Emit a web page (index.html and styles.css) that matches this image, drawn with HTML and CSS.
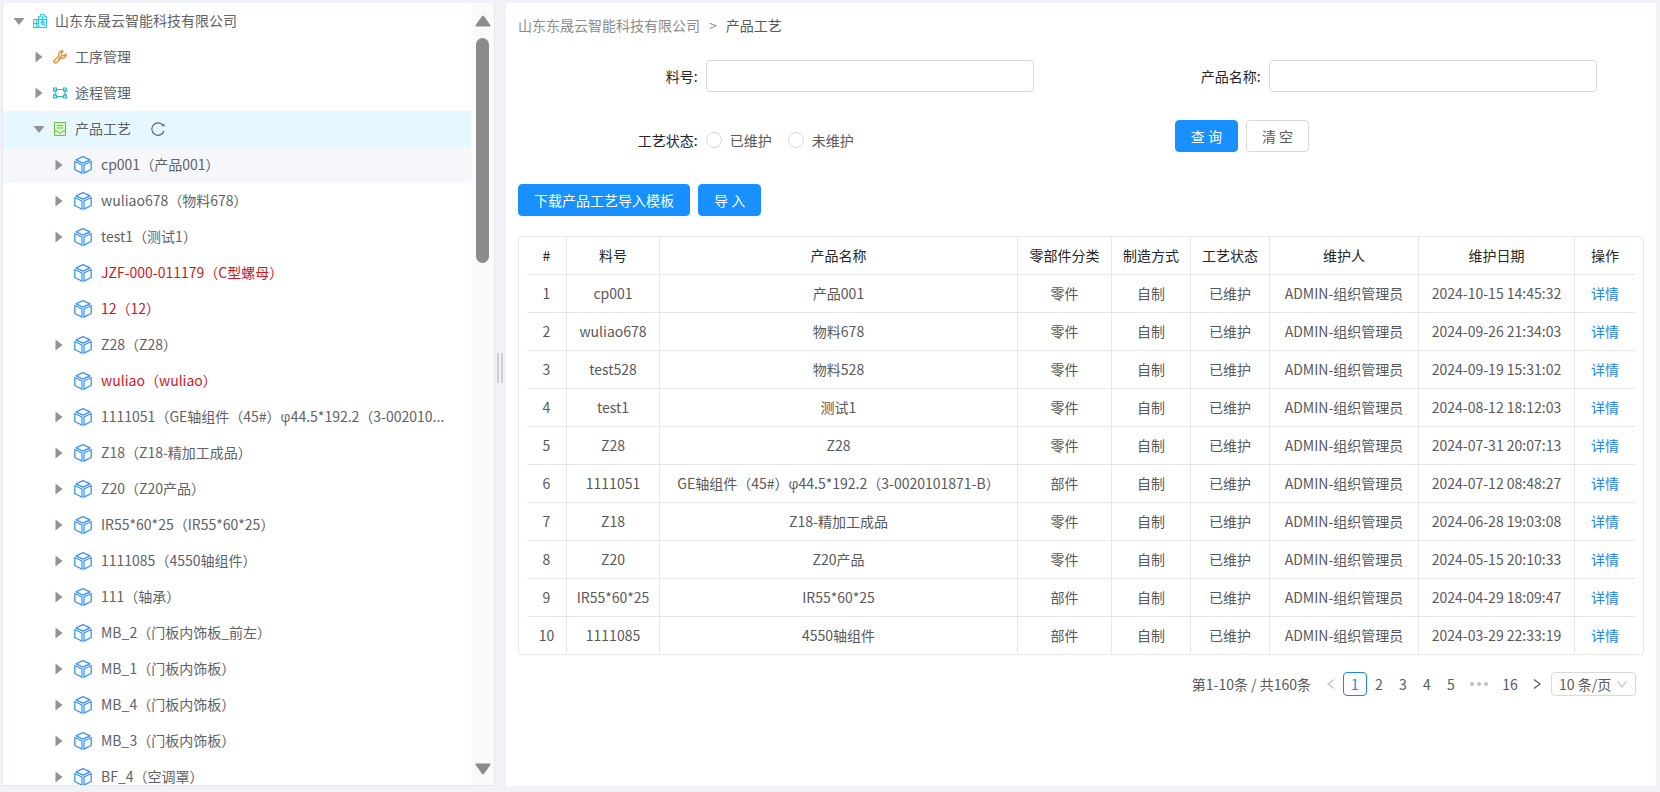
FILE: index.html
```
<!DOCTYPE html>
<html lang="zh-CN">
<head>
<meta charset="utf-8">
<title>产品工艺</title>
<link rel="stylesheet" href="styles.css">
</head>
<body>
<svg class="sprite" aria-hidden="true">
  <symbol id="caret" viewBox="0 0 12 12"><path d="M2.500 .500 9.500 6l-7 5.500z" fill="#909399"/></symbol>
  <symbol id="caret-open" viewBox="0 0 12 12"><path d="M.500 3h11L6 10z" fill="#909399"/></symbol>
  <symbol id="company" viewBox="0 0 14 14"><g fill="none" stroke="#35bfe6"><path d="M6 13.500H.500v-8H6M.500 9.500H6M3.500 5.500v8" fill="#dff6fc"/><path d="M5.500 13.500V2.500h2V.500h4v2h2v11zM5.500 5.500h8" fill="#dff6fc"/><path d="M7.500 8.500h1.500M10.500 8.500H12M9.500 2v9M10.500 11H12" stroke-width="1.500"/></g></symbol>
  <symbol id="wrench" viewBox="0 0 14 14"><g fill="#fdf0dc" stroke="#e6862a" stroke-width="1.200" stroke-linejoin="round"><path d="M12.900 3.800 10.800 6 8.800 5.300 8.200 3.200 10.300 1.100C7.500.300 5 2.700 6 5.600L1 10.600c-.900.900.900 3.300 2.400 2.300L8.500 7.900c2.900 1 5.300-1.400 4.400-4.100z"/><path d="M5.200 9.300 8.500 6" /></g></symbol>
  <symbol id="route" viewBox="0 0 14 14"><g fill="none" stroke="#22b8b8" stroke-width="1.200"><path d="M3 3.500h8M3 10.500h8M2 4v6M12 4v6"/><path d="M.600 2h2.800v2.800H.600zM10.600 2h2.800v2.800h-2.800zM.600 9.200h2.800V12H.600zM10.600 9.200h2.800V12h-2.800z" fill="#e5fafa"/></g></symbol>
  <symbol id="doc" viewBox="0 0 14 14"><g fill="none" stroke="#6cc04a"><path d="M1.500.500h11v13h-11z" fill="#dcf5cf"/><path d="M4 3.500h6M4 6h6M1.500 9H4l3 2.500L10 9h2.500"/></g></symbol>
  <symbol id="cube" viewBox="0 0 18 18"><g fill="#fff" stroke="#3a93ec" stroke-linejoin="round" stroke-width="1.300"><path d="M9 .700 16 3.800 9 7.200 2 3.800z"/><path d="M.800 5.500v8L8 17.200V9z"/><path d="M17.200 5.500v8L10 17.200V9z"/><path d="M9 8.500V17.500" stroke="#8cc4f8"/></g></symbol>
  <symbol id="reload" viewBox="0 0 14 14"><path d="M12.900 9A6.200 6.200 0 1 1 12.300 3.800" fill="none" stroke="#606266" stroke-width="1.200"/><path d="M10.500 4.200h3V1.500z" fill="#606266"/></symbol>
</svg>

<main class="layout">
  <aside class="side">
    <ul class="tree">
      <li class="node l1"><button class="toggle" aria-label="收起"><svg><use href="#caret-open"/></svg></button><svg class="icon"><use href="#company"/></svg><span>山东东晟云智能科技有限公司</span></li>
      <li class="node l2"><button class="toggle" aria-label="展开"><svg><use href="#caret"/></svg></button><svg class="icon"><use href="#wrench"/></svg><span>工序管理</span></li>
      <li class="node l2"><button class="toggle" aria-label="展开"><svg><use href="#caret"/></svg></button><svg class="icon"><use href="#route"/></svg><span>途程管理</span></li>
      <li class="node l2 selected"><button class="toggle" aria-label="收起"><svg><use href="#caret-open"/></svg></button><svg class="icon"><use href="#doc"/></svg><span>产品工艺</span><button class="reload" aria-label="刷新"><svg><use href="#reload"/></svg></button></li>
      <li class="node l3 hover"><button class="toggle" aria-label="展开"><svg><use href="#caret"/></svg></button><svg class="cube"><use href="#cube"/></svg><span>cp001（产品001）</span></li>
      <li class="node l3"><button class="toggle" aria-label="展开"><svg><use href="#caret"/></svg></button><svg class="cube"><use href="#cube"/></svg><span>wuliao678（物料678）</span></li>
      <li class="node l3"><button class="toggle" aria-label="展开"><svg><use href="#caret"/></svg></button><svg class="cube"><use href="#cube"/></svg><span>test1（测试1）</span></li>
      <li class="node l3 leaf"><svg class="cube"><use href="#cube"/></svg><span>JZF-000-011179（C型螺母）</span></li>
      <li class="node l3 leaf"><svg class="cube"><use href="#cube"/></svg><span>12（12）</span></li>
      <li class="node l3"><button class="toggle" aria-label="展开"><svg><use href="#caret"/></svg></button><svg class="cube"><use href="#cube"/></svg><span>Z28（Z28）</span></li>
      <li class="node l3 leaf"><svg class="cube"><use href="#cube"/></svg><span>wuliao（wuliao）</span></li>
      <li class="node l3"><button class="toggle" aria-label="展开"><svg><use href="#caret"/></svg></button><svg class="cube"><use href="#cube"/></svg><span>1111051（GE轴组件（45#）<i class="greek">φ</i>44.5*192.2（3-002010...</span></li>
      <li class="node l3"><button class="toggle" aria-label="展开"><svg><use href="#caret"/></svg></button><svg class="cube"><use href="#cube"/></svg><span>Z18（Z18-精加工成品）</span></li>
      <li class="node l3"><button class="toggle" aria-label="展开"><svg><use href="#caret"/></svg></button><svg class="cube"><use href="#cube"/></svg><span>Z20（Z20产品）</span></li>
      <li class="node l3"><button class="toggle" aria-label="展开"><svg><use href="#caret"/></svg></button><svg class="cube"><use href="#cube"/></svg><span>IR55*60*25（IR55*60*25）</span></li>
      <li class="node l3"><button class="toggle" aria-label="展开"><svg><use href="#caret"/></svg></button><svg class="cube"><use href="#cube"/></svg><span>1111085（4550轴组件）</span></li>
      <li class="node l3"><button class="toggle" aria-label="展开"><svg><use href="#caret"/></svg></button><svg class="cube"><use href="#cube"/></svg><span>111（轴承）</span></li>
      <li class="node l3"><button class="toggle" aria-label="展开"><svg><use href="#caret"/></svg></button><svg class="cube"><use href="#cube"/></svg><span>MB_2（门板内饰板_前左）</span></li>
      <li class="node l3"><button class="toggle" aria-label="展开"><svg><use href="#caret"/></svg></button><svg class="cube"><use href="#cube"/></svg><span>MB_1（门板内饰板）</span></li>
      <li class="node l3"><button class="toggle" aria-label="展开"><svg><use href="#caret"/></svg></button><svg class="cube"><use href="#cube"/></svg><span>MB_4（门板内饰板）</span></li>
      <li class="node l3"><button class="toggle" aria-label="展开"><svg><use href="#caret"/></svg></button><svg class="cube"><use href="#cube"/></svg><span>MB_3（门板内饰板）</span></li>
      <li class="node l3"><button class="toggle" aria-label="展开"><svg><use href="#caret"/></svg></button><svg class="cube"><use href="#cube"/></svg><span>BF_4（空调罩）</span></li>
    </ul>
    <div class="scrollbar">
      <svg class="arrow" viewBox="0 0 16 12"><path d="M8 1.500 14.500 10.500h-13z"/></svg>
      <div class="track"><div class="thumb"></div></div>
      <svg class="arrow" viewBox="0 0 16 12"><path d="M8 10.500 14.500 1.500h-13z"/></svg>
    </div>
  </aside>

  <div class="splitter"><i></i><i></i></div>

  <section class="content">
    <nav class="crumbs"><a href="#">山东东晟云智能科技有限公司</a><span class="sep">&gt;</span><span class="here">产品工艺</span></nav>

    <form class="search">
      <div class="field"><label for="code">料号:</label><input class="text" id="code" type="text"></div>
      <div class="field"><label for="name">产品名称:</label><input class="text" id="name" type="text"></div>
      <div class="field"><span class="label" id="state">工艺状态:</span>
        <div class="radios" role="radiogroup" aria-labelledby="state">
          <label><input type="radio" name="state">已维护</label>
          <label><input type="radio" name="state">未维护</label>
        </div>
      </div>
      <div class="actions"><button type="button" class="btn primary">查 询</button><button type="button" class="btn">清 空</button></div>
    </form>

    <div class="toolbar"><button class="btn primary">下载产品工艺导入模板</button><button class="btn primary">导 入</button></div>

    <div class="table-box">
      <table>
        <colgroup><col class="c-no"><col class="c-code"><col><col class="c-kind"><col class="c-mode"><col class="c-mode"><col class="c-user"><col class="c-date"><col class="c-op"></colgroup>
        <thead><tr><th>#</th><th>料号</th><th>产品名称</th><th>零部件分类</th><th>制造方式</th><th>工艺状态</th><th>维护人</th><th>维护日期</th><th>操作</th></tr></thead>
        <tbody>
          <tr><td>1</td><td>cp001</td><td>产品001</td><td>零件</td><td>自制</td><td>已维护</td><td>ADMIN-组织管理员</td><td>2024-10-15 14:45:32</td><td><a href="#">详情</a></td></tr>
          <tr><td>2</td><td>wuliao678</td><td>物料678</td><td>零件</td><td>自制</td><td>已维护</td><td>ADMIN-组织管理员</td><td>2024-09-26 21:34:03</td><td><a href="#">详情</a></td></tr>
          <tr><td>3</td><td>test528</td><td>物料528</td><td>零件</td><td>自制</td><td>已维护</td><td>ADMIN-组织管理员</td><td>2024-09-19 15:31:02</td><td><a href="#">详情</a></td></tr>
          <tr><td>4</td><td>test1</td><td>测试1</td><td>零件</td><td>自制</td><td>已维护</td><td>ADMIN-组织管理员</td><td>2024-08-12 18:12:03</td><td><a href="#">详情</a></td></tr>
          <tr><td>5</td><td>Z28</td><td>Z28</td><td>零件</td><td>自制</td><td>已维护</td><td>ADMIN-组织管理员</td><td>2024-07-31 20:07:13</td><td><a href="#">详情</a></td></tr>
          <tr><td>6</td><td>1111051</td><td>GE轴组件（45#）<i class="greek">φ</i>44.5*192.2（3-0020101871-B）</td><td>部件</td><td>自制</td><td>已维护</td><td>ADMIN-组织管理员</td><td>2024-07-12 08:48:27</td><td><a href="#">详情</a></td></tr>
          <tr><td>7</td><td>Z18</td><td>Z18-精加工成品</td><td>零件</td><td>自制</td><td>已维护</td><td>ADMIN-组织管理员</td><td>2024-06-28 19:03:08</td><td><a href="#">详情</a></td></tr>
          <tr><td>8</td><td>Z20</td><td>Z20产品</td><td>零件</td><td>自制</td><td>已维护</td><td>ADMIN-组织管理员</td><td>2024-05-15 20:10:33</td><td><a href="#">详情</a></td></tr>
          <tr><td>9</td><td>IR55*60*25</td><td>IR55*60*25</td><td>部件</td><td>自制</td><td>已维护</td><td>ADMIN-组织管理员</td><td>2024-04-29 18:09:47</td><td><a href="#">详情</a></td></tr>
          <tr><td>10</td><td>1111085</td><td>4550轴组件</td><td>部件</td><td>自制</td><td>已维护</td><td>ADMIN-组织管理员</td><td>2024-03-29 22:33:19</td><td><a href="#">详情</a></td></tr>
        </tbody>
      </table>
    </div>

    <nav class="pager" aria-label="分页">
      <span class="total">第1-10条 / 共160条</span>
      <button class="page off" aria-label="上一页" disabled><svg viewBox="0 0 12 12"><path d="M9 1.500 3 6l6 4.500"/></svg></button>
      <button class="page current">1</button>
      <button class="page">2</button>
      <button class="page">3</button>
      <button class="page">4</button>
      <button class="page">5</button>
      <button class="page jump" aria-label="向后 5 页"><i></i><i></i><i></i></button>
      <button class="page wide">16</button>
      <button class="page" aria-label="下一页"><svg viewBox="0 0 12 12"><path d="M3 1.500 9 6l-6 4.500"/></svg></button>
      <div class="size">
        <select aria-label="每页条数"><option>10 条/页</option></select>
        <svg viewBox="0 0 12 12"><path d="M1.500 3 6 9l4.500-6"/></svg>
      </div>
    </nav>
  </section>
</main>
</body>
</html>
```

FILE: styles.css
```
* { box-sizing: border-box; }

body {
  margin: 0;
  background: #f0f2f7;
  color: #595959;
  font: 14px/22px "Noto Sans CJK SC", sans-serif;
}

button, input, select { font: inherit; color: inherit; }
button { padding: 0; border: 0; background: none; cursor: pointer; }
a { color: inherit; text-decoration: none; }
.sprite { position: absolute; width: 0; height: 0; }
.greek { font-family: "Open Sans", sans-serif; font-style: normal; line-height: 1; }

.layout {
  display: flex;
  height: 100vh;
  padding: 3px 4px 6px 2px;
}

/* Navigation tree */
.side {
  display: flex;
  flex: 0 0 493px;
  background: #fff;
  border: 1px solid #e6e8ef;
  border-top: 0;
  overflow: hidden;
}
.tree {
  flex: 1;
  min-width: 0;
  margin: 0;
  padding: 0;
  list-style: none;
  color: #606266;
}
.node {
  display: flex;
  align-items: center;
  height: 36px;
  white-space: nowrap;
}
.node span { padding-bottom: 2px; }
.l1 { padding-left: 4px; }
.l2 { padding-left: 24px; }
.l3 { padding-left: 44px; }
.leaf { padding-left: 71px; color: #c9191d; }
.selected { background: #e6f7ff; }
.hover { background: #f5f7fa; }
.toggle {
  display: grid;
  place-items: center;
  width: 24px;
  height: 24px;
  margin-right: 2px;
}
.toggle svg { width: 12px; height: 12px; }
.icon { width: 14px; height: 14px; margin-right: 8px; }
.cube { width: 18px; height: 18px; margin-right: 9px; }
.l3 .toggle { margin-right: 3px; }
.reload { height: 14px; margin-left: 20px; }
.reload svg { display: block; width: 14px; height: 14px; }

.scrollbar {
  display: flex;
  flex-direction: column;
  align-items: center;
  flex: 0 0 23px;
  padding: 12px 0 10px;
  background: #fafafa;
}
.arrow { width: 16px; height: 12px; fill: #8b8b8b; stroke: #8b8b8b; stroke-width: 2; stroke-linejoin: round; }
.track { flex: 1; padding-top: 11px; }
.thumb { width: 13px; height: 31%; min-height: 30px; border-radius: 7px; background: #8b8b8b; }

.splitter {
  display: flex;
  flex: 0 0 11px;
  gap: 2px;
  padding: 350px 0 0 2px;
}
.splitter i { width: 2px; height: 30px; background: #ccced3; }

/* Content */
.content {
  flex: 1;
  min-width: 0;
  padding: 11px 12px;
  background: #fff;
}
.crumbs { color: #8c8c8c; }
.sep { margin: 0 9px; }
.here { color: #595959; }

.search {
  display: grid;
  grid-template-columns: 1fr 1fr;
  row-gap: 24px;
  margin-top: 20px;
}
.field {
  display: grid;
  grid-template-columns: 4fr 7fr 1fr;
  align-items: center;
  height: 40px;
}
.field > label, .label {
  padding-right: 8px;
  color: #262626;
  text-align: right;
}
.text {
  width: 100%;
  height: 32px;
  padding: 4px 11px;
  border: 1px solid #d9d9d9;
  border-radius: 4px;
  background: #fff;
}
.radios { display: flex; gap: 16px; }
.radios label { display: flex; align-items: center; gap: 8px; }
.radios input {
  appearance: none;
  width: 16px;
  height: 16px;
  margin: 0;
  border: 1px solid #d9d9d9;
  border-radius: 50%;
}
.actions { display: flex; gap: 8px; margin-left: 16.667%; }
.btn {
  height: 32px;
  padding: 0 15px;
  border: 1px solid #d9d9d9;
  border-radius: 4px;
  background: #fff;
}
.primary { border-color: #1890ff; background: #1890ff; color: #fff; }
.toolbar { display: flex; gap: 8px; margin: 24px 0 20px; }

.table-box {
  padding: 0 8px;
  border: 1px solid #e8e8e8;
  border-radius: 4px;
}
table { width: 100%; table-layout: fixed; border-collapse: separate; border-spacing: 0; }
th, td {
  height: 38px;
  padding: 0 0 2px;
  border-right: 1px solid #e8e8e8;
  border-bottom: 1px solid #e8e8e8;
  font-weight: 400;
  text-align: center;
  white-space: nowrap;
}
th { color: #262626; }
th:last-child, td:last-child { border-right: 0; }
tbody tr:last-child td { height: 37px; border-bottom: 0; }
td a { color: #1b87e6; }
.c-no { width: 40px; }
.c-code { width: 93px; }
.c-kind { width: 94px; }
.c-mode { width: 79px; }
.c-user { width: 149px; }
.c-date { width: 156px; }
.c-op { width: 60px; }

.pager {
  display: flex;
  align-items: center;
  justify-content: flex-end;
  margin: 17px 8px 0 0;
}
.total { margin-right: 8px; }
.page {
  display: flex;
  align-items: center;
  justify-content: center;
  width: 24px;
  height: 24px;
}
.page svg, .size svg { width: 12px; height: 12px; fill: none; stroke: #595959; stroke-width: 1.2; }
.off svg, .size svg { stroke: #bfbfbf; }
.current { border: 1px solid #1b87e6; border-radius: 4px; color: #1b87e6; }
.jump { width: 32px; gap: 3px; }
.jump i { width: 4px; height: 4px; border-radius: 50%; background: #bfbfbf; }
.wide { width: 30px; }
.size { position: relative; margin-left: 2px; }
.size select {
  display: block;
  appearance: none;
  width: 85px;
  height: 24px;
  padding: 0 7px;
  border: 1px solid #d9d9d9;
  border-radius: 4px;
  background: #fff;
}
.size svg { position: absolute; top: 6px; right: 8px; pointer-events: none; }
```
